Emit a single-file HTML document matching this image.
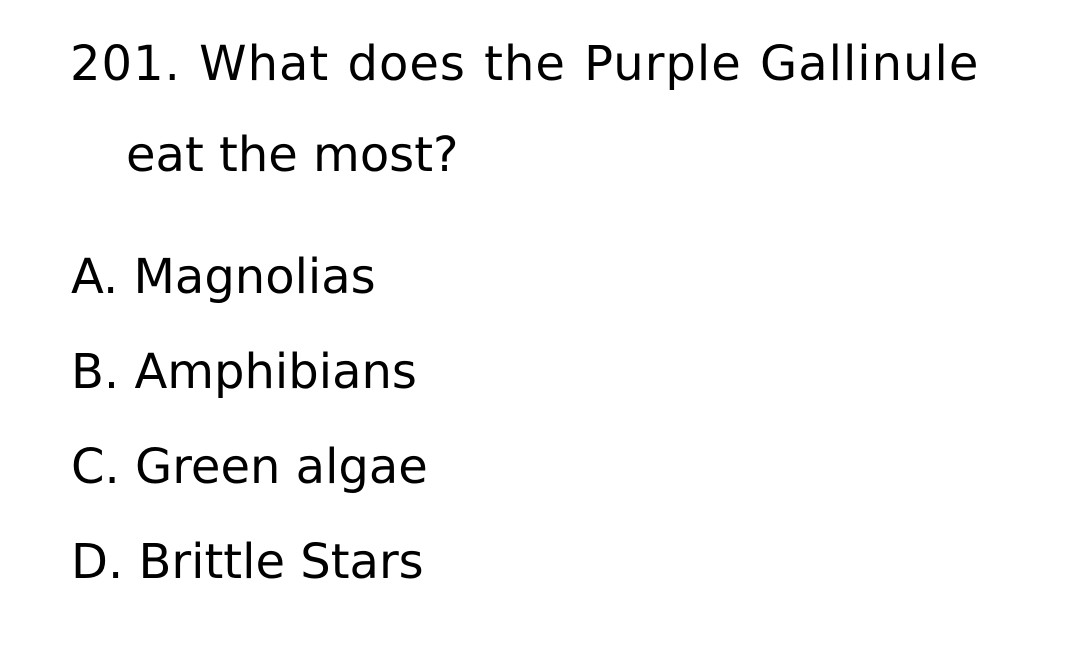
<!DOCTYPE html>
<html><head><style>
body{margin:0;width:1080px;height:663px;background:#fff;position:relative;overflow:hidden;font-family:"DejaVu Sans","Liberation Sans",sans-serif;font-size:48px;color:#000}
div{position:absolute;white-space:nowrap;line-height:normal}
</style></head><body>
<div style="left:70px;top:36px;letter-spacing:1px;word-spacing:2px">201. What does the Purple Gallinule</div>
<div style="left:126px;top:127px">eat the most?</div>
<div style="left:71px;top:249px">A. Magnolias</div>
<div style="left:71px;top:344px">B. Amphibians</div>
<div style="left:71px;top:439px">C. Green algae</div>
<div style="left:71px;top:534px">D. Brittle Stars</div>
</body></html>
